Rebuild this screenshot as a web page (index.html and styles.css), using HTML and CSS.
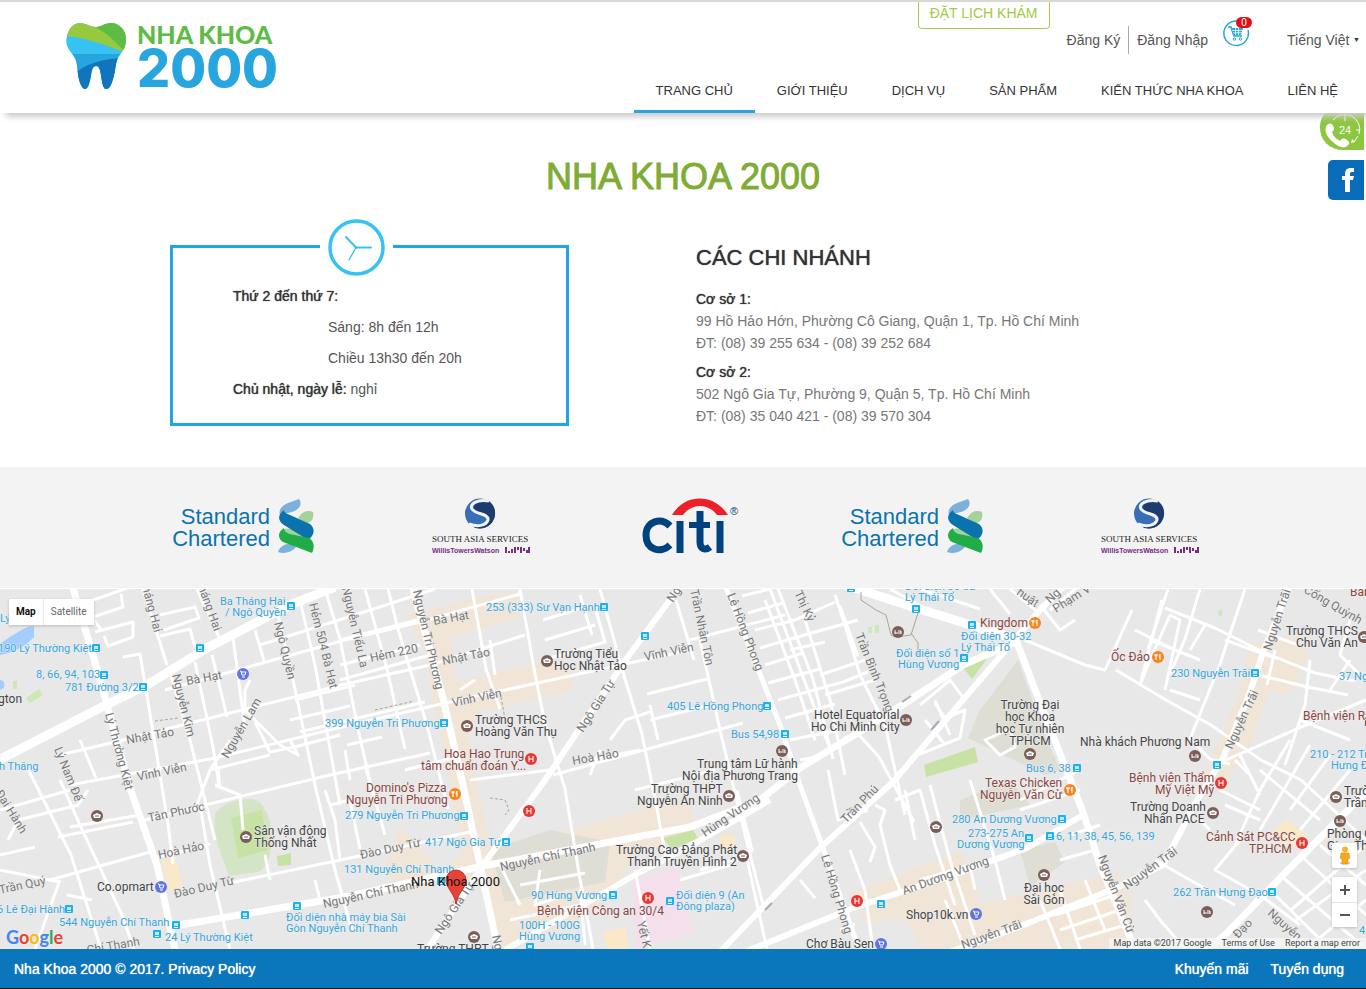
FILE: index.html
```html
<!DOCTYPE html>
<html lang="vi">
<head>
<meta charset="utf-8">
<meta name="viewport" content="width=device-width, initial-scale=1">
<title>Nha Khoa 2000</title>
<link rel="stylesheet" href="styles.css">
</head>
<body>
<header class="header">
  <a class="logo" href="#" aria-label="Nha Khoa 2000">
    <svg width="60" height="68" viewBox="0 0 60 68" aria-hidden="true">
      <defs><clipPath id="tooth"><path d="M1 14C3 6 8 1 14 1C20 1 24 5 30 5C35 5 39 1 45 1C53 1 60 8 60 17C60 25 57 29 53 34C49 40 50 48 47 57C45 64 43 67 40 67C37 67 36 60 35 53C34 47 33 44 30 44C27 44 26 47 25 53C24 60 22 67 19 67C16 67 13 60 12 52C11 43 11 38 7 33C2 27-1 22 1 14Z"/></clipPath></defs>
      <g clip-path="url(#tooth)">
        <path fill="#36c2f3" d="M0 0h60v68H0z"/>
        <path fill="#26a5df" d="M0 32h60v36H0z"/>
        <path fill="#1075bc" d="M8 52C18 43 35 36 60 36v32H8z"/>
        <path fill="#96c93e" d="M0 0h60v31C42 24 22 16 0 14z"/>
        <path fill="#5ebb46" d="M30 6L42 0h18v30C50 22 43 11 30 6z"/>
      </g>
    </svg>
    <span class="logo-text"><span class="logo-name">NHA KHOA</span><span class="logo-number">2000</span></span>
  </a>
  <div class="header-side">
    <div class="toolbar">
      <a class="booking" href="#">ĐẶT LỊCH KHÁM</a>
      <div class="account"><a href="#">Đăng Ký</a><a href="#">Đăng Nhập</a></div>
      <a class="cart" href="#" aria-label="Giỏ hàng">
        <svg width="28" height="28" viewBox="0 0 28 28" aria-hidden="true" fill="none" stroke="#26a5df">
          <path stroke-width="1.500" d="M15 2a12.300 12.300 0 1 0 11 9"/>
          <path stroke-width="1.500" d="M6 8h3l3 9h8"/>
          <path fill="#26a5df" stroke="none" d="M9 9h12l-2 7h-8z"/>
          <path stroke="#fff" stroke-width=".8" d="M10 11.500h11M11 13.800h9M13.500 9v7M16.500 9v7"/>
          <circle cx="12.500" cy="20" r="1.200" /><circle cx="18.500" cy="20" r="1.200"/>
        </svg>
        <span class="cart-count">0</span>
      </a>
      <label class="language"><select aria-label="Ngôn ngữ"><option>Tiếng Việt</option></select><span aria-hidden="true">▼</span></label>
    </div>
    <nav class="nav">
      <a class="active" href="#">TRANG CHỦ</a><a href="#">GIỚI THIỆU</a><a href="#">DỊCH VỤ</a><a href="#">SẢN PHẨM</a><a href="#">KIẾN THỨC NHA KHOA</a><a href="#">LIÊN HỆ</a>
    </nav>
  </div>
</header>

<main>
  <section class="intro">
    <aside class="quick">
      <a class="hotline" href="#" aria-label="Hotline 24h">
        <svg width="44" height="45" viewBox="0 0 44 45" aria-hidden="true">
          <path d="M13 15a15 15 0 0 1 26 14M38 31l-4 6" fill="none" stroke="#fff"/>
          <path d="M25 10v6M36 25h3" stroke="#fff"/>
          <path d="M31 38l1-4 3 3z" fill="#fff"/>
          <path fill="#fff" d="M6 22c1-4 6-5 7-1 2 3 1 4-1 6 1 4 4 7 8 9 2-3 4-3 7-1 3 2 3 4 0 6-3 3-9 1-14-4C8 33 4 27 6 22z"/>
          <text class="hotline-text" x="19" y="29">24</text>
        </svg>
      </a>
      <a class="facebook" href="#" aria-label="Facebook">
        <svg width="14" height="26" viewBox="0 0 14 26" aria-hidden="true"><path fill="#fff" d="M4 25V13H1V9h3V7c0-4 2-6 6-6h3v4h-2C9 5 9 6 9 7v2h4l-1 4H9v12z"/></svg>
      </a>
    </aside>
    <h1>NHA KHOA 2000</h1>
    <div class="details">
      <div class="hours">
        <span class="clock">
          <svg width="57" height="57" viewBox="0 0 57 57" fill="none" stroke="#36c2f3" stroke-linecap="round" aria-hidden="true">
            <circle cx="28.500" cy="28.500" r="26.500" stroke-width="3.500"/>
            <path stroke-width="2" d="M28 28.500h15M28 28.500L18 18"/><path stroke-width="1.300" d="M28 28.500L21 41"/><circle cx="28" cy="28.500" r="1"/>
          </svg>
        </span>
        <p><b>Thứ 2 đến thứ 7:</b></p>
        <p class="indent">Sáng: 8h đến 12h</p>
        <p class="indent">Chiều 13h30 đến 20h</p>
        <p><b>Chủ nhật, ngày lễ:</b> nghỉ</p>
      </div>
      <div class="branches">
        <h2>CÁC CHI NHÁNH</h2>
        <address><b>Cơ sở 1:</b><span>99 Hồ Hảo Hớn, Phường Cô Giang, Quận 1, Tp. Hồ Chí Minh</span><span>ĐT: (08) 39 255 634 - (08) 39 252 684</span></address>
        <address><b>Cơ sở 2:</b><span>502 Ngô Gia Tự, Phường 9, Quận 5, Tp. Hồ Chí Minh</span><span>ĐT: (08) 35 040 421 - (08) 39 570 304</span></address>
      </div>
    </div>
  </section>

  <section class="partners" aria-label="Đối tác">
    <svg class="partner" width="158" height="56" viewBox="0 0 158 56">
      <g id="standard">
        <text class="sc-text" x="99" y="26">Standard</text><text class="sc-text" x="99" y="48">Chartered</text>
        <path fill="#7cb1db" d="M109 17C107 11 112 7 117 5L128 1C132 6 128 12 121 14z"/>
        <path fill="#a5d29b" d="M127 20C132 12 138 12 142 14C143 20 142 23 135 26z"/>
        <path fill="#7cb1db" d="M107 54C109 48 115 45 121 46L125 49C120 55 113 56 107 54z"/>
        <path fill="#a5d29b" d="M111 32c8-3 16-1 23 4l-5 5z"/>
        <path fill="#0a73ae" d="M113 12C106 17 107 23 113 27L137 42C143 38 145 31 139 26L119 17C114 15 113 14 113 12z"/>
        <path fill="#22ac47" d="M113 30C106 34 107 41 112 44L141 55C144 49 143 43 138 40L119 36C114 34 113 32 113 30z"/>
      </g>
    </svg>
    <svg class="partner" width="109" height="56" viewBox="0 0 109 56">
      <g id="asia">
        <ellipse cx="49" cy="15.500" rx="15" ry="15" fill="#376eb5"/>
        <path fill="#1c3c70" d="M52 1C60 2 65 9 64 17C63 25 56 31 48 30.500C42 30 42 29 46 28C59 28 60 20 54 17L44 12C41 9 45 4 52 1z"/>
        <path fill="none" stroke="#f3f3f3" stroke-width="3" d="M58 3C46 1 38 6 41 11C45 17 58 15 57 22C55 28 46 29 38 26"/>
        <text class="asia-text" x="1" y="44">SOUTH ASIA SERVICES</text>
        <text class="willis" x="1" y="55">WillisTowersWatson</text>
        <path fill="none" stroke="#782c82" stroke-width="2" d="M75 49v6M78 53v2M81 51v4M84 49v6M87 49v3M90 49v6M93 50v3M96 52v3M98 49v6"/>
      </g>
    </svg>
    <svg class="partner" width="97" height="56" viewBox="0 0 97 56" role="img" aria-label="citi">
      <path fill="#ed2029" d="M30 17C43-5 72-5 86 17H75C66 5 50 5 41 17z"/>
      <g fill="none" stroke="#004280" stroke-width="7"><path d="M28 28C19 19 4 23 4 37C4 52 19 56 28 47M38 23v32M78 23v32M58 13v31c0 7 5 9 10 5"/><path stroke-width="6" d="M47 27h21"/></g>
      <text class="registered" x="88" y="17">®</text>
    </svg>
    <svg class="partner" width="158" height="56" viewBox="0 0 158 56" role="img" aria-label="Standard Chartered"><use href="#standard"/></svg>
    <svg class="partner" width="109" height="56" viewBox="0 0 109 56" role="img" aria-label="South Asia Services"><use href="#asia"/></svg>
  </section>

  <section class="map" aria-label="Bản đồ">
    <svg class="map-canvas" viewBox="0 589 1366 360" preserveAspectRatio="xMidYMid slice" aria-hidden="true">
      <defs>
        <g id="b"><rect x="-4" y="-4" width="8" height="8" rx="1" fill="#1eb1f1"/><path d="M-2-2h4v3h-4z" fill="#bfe8fb"/><path d="M-2 2.500h4" stroke="#fff"/></g>
        <g id="s"><circle r="6" fill="#7b5e57"/><path d="M-4-1L0-3l4 2-1 3h-6z" fill="#fff"/><path d="M-2 0h4" stroke="#7b5e57"/></g>
        <g id="o"><circle r="6" fill="#7b5e57"/><path d="M-3 2v-4M-3 1h6v-2H0M3 1v1" fill="none" stroke="#fff"/></g>
        <g id="h"><circle r="6" fill="#e53935"/><path d="M-2-3v6M2-3v6M-2 0h4" stroke="#fff"/></g>
        <g id="f"><circle r="6" fill="#f6861f"/><path d="M-2-3v6M2-3v6M-3-3v2h2v-2M2-3q-2 2 0 4" fill="none" stroke="#fff"/></g>
        <g id="m"><circle r="6" fill="#6275df"/><path d="M-3-3h1l1 4h3l1-3h-5M-1 3h3" fill="none" stroke="#fff"/></g>
      </defs>
      <path fill="#e8e8e8" d="M0 589h1366v360H0z"/>
      <g fill="#f0e5d7">
        <path d="M405 616L460 602 517 589 520 618 453 636 455 682 540 662 572 665 573 690 480 712 468 735 478 790 490 846 560 832 690 796 695 838 640 850 600 905 575 925 500 949 478 875 400 895 385 868 400 825 440 870 462 855 450 780 432 700 425 650z"/>
        <path d="M1250 643L1303 636 1307 658 1290 694 1270 692 1248 748 1230 778 1200 785 1240 690z"/>
        <path d="M850 893L960 851 980 895 975 905 865 925z"/><path d="M905 920L1120 872 1132 900 1133 949H920z"/>
      </g>
      <path fill="#deded5" d="M980 710L1018 660 1045 735 1060 770 1045 775 968 738zM960 800l50-20 20 25-70 15zM1020 850l35-8 10 20-35 25zM490 850l60-20 60 12-5 40-100 20z"/>
      <path fill="#a3ccff" d="M0 644q22-16 34-19v12Q20 652 0 655zM0 680q6 0 4 8l-4 2z"/>
      <path fill="#cde8b5" d="M26 698l13-9 4 6-13 8zM13 681h4v8h-4zM868 627h4v6h-4zM875 625h4v8h-4zM1218 611l4-2v6l-3 2z"/>
      <path fill="#d4e5c5" d="M215 815C220 803 240 798 254 799C278 810 276 865 258 872L229 876C220 850 212 835 215 815z"/>
      <path fill="#c8e2a6" d="M231 818l31-8 6 40-30 8zM277 856l14-3v12l-13 1zM663 838l30-8 5 8-26 12zM962 666l36-22-26 35zM924 765l51-18 3 15-52 15z"/>
      <path fill="#fae8c8" d="M162 860l14-3 6 30-13 4zM719 836l15-2 2 13-14 2zM603 932l22-4 4 21h-22zM1272 833l15-14 20 18-15 12z"/>
      <path fill="#f5dfec" d="M632 882l45-15 15 65-55 17z"/>
      <g fill="none" stroke="#fff" stroke-linejoin="round">
        <path stroke-width="3" d="M85 603l42-15M93 617l30-10-2-13M95 632l38-10v15l-25 9-4-10M92 617l10 14M143 589l24 76M197 589l23 50M123 657l17-3 15 90 13 80 5 40M170 672l20 68 25 100M195 662l18 85 6 38M212 655l15 62M233 638l12 90M255 630l9 31M278 615l14 60 23 110 20 85 17 60M300 600l15 65 25 140M325 589l15 50 18 90 16 70M365 589l22 80 18 80M388 589l10 40 30 100 20 80M160 615l35-8 4 11-35 12M160 636l30-7 5 18"/>
        <path stroke-width="3" d="M70 785l145-27 135-33 100-23 110-24 130-28M60 755l55-13 115-29 120-30 80-18 95-30M165 690l65-18 115-32 75-18 100-28M260 645l95-30 80-26M145 820l60-15 125-30 100-22M50 880l100-28M155 858l55-14M230 883l120-25 120-26"/>
        <path stroke-width="3" d="M290 720l60-14M295 700l60-15M300 732l125-30M0 810l70-20M0 855l35-8M8 840l10-20 60-15 10-15M70 827l70-12M58 837l75-15M60 780l20 45 42 90 12 34M26 765l45 90 30 94M0 870l60 12M60 880l-25 69M67 895l25 5M80 740l16 38M195 810l15-40 60-15M215 785l25 10 3 35M250 680l-5 10v20l35 35 18 10-8-15M230 740l-20 30M255 722l15 30 25-5 45-12M200 805l10 60 20 84M220 789l-2-20M330 805l20-5 10 49M340 860l-5-40-10-30M365 765l20 70M405 770l60-15M270 880l-5-25M315 880l5 20"/>
        <path stroke-width="3" d="M472 589l14 80 14 40M520 589l15 85 10 50 20 65 15 90 13 70M543 620l45-14M545 640l50-15M550 658l55-16-10-35M600 589l22 80 20 65 15 75 10 55M580 595l12 40M475 680l-15 10M490 640l5 35M340 665l80-20M340 680l90-25M340 640l85-22M347 745l35-8M350 780l-5-30M690 640l95-25M647 694l60-15M650 720l60-15M610 740l15-20 25-8M590 760l50-10M553 775l80-22 110-30M700 640l20 90 25 105 18 70M676 600l18 60M650 705l8 35M600 750l-10 25M635 790l80-20M470 780l80-10M500 865l20 40M540 870l-5 35 25-8M520 885l65-12M580 890l5 55M510 920l70-15M635 870l15 79M700 870l40-12M737 790l15 60-15 10M745 850l22 99M680 880l50-15"/>
        <path stroke-width="3" d="M742 596l28-7M748 613l35-10M755 630l40-10 40-18M760 648l48-14 50-14M765 665l38-12M768 683l52-14M778 700l65-18 25-10M785 718l50-14M790 740l50-10M765 600l30 80 20 60M778 589l35 90 20 80M805 620l25 80 15 75M835 595l10 30 15 50 25 50 20 90M840 606l18 50M770 589l60 160M790 650l35-8M820 675l45-15M825 695l50-15M800 760l25-5M828 770l10 50 30-10M839 745l20-10 20 22 35 65"/>
        <path stroke-width="3" d="M910 758l25-10 25-10 5-28-20 8-10-15M920 705l30-25 15 20M935 700l15 35M925 720l20 25M895 800l25-10 15 55 20 60M875 805l10 5-5 15 10 40 12 30M860 822l15 25-5 15M850 850l15 40 8 60M905 790l10 50M930 785l20 75 25 75M970 780l25 80 10 40M800 880l15 18M840 930l15-6M920 880l50-15 5 25M945 900l20 49M985 740l15 15 15-8-5-18z"/>
        <path stroke-width="3" d="M1025 640l60 25 20 5 27-60M1116 670l50 30 45 25 50 35 40 20 65 60M1162 600l-22 85 10-25 20-45 10 5-15 70M1168 589l-20 60M1135 630l40 20M1165 608l50 20 50 25 50 20 40 8M1200 589l-15 50-15 35M1245 589l-25 75-30 75 20 20 20 5M1150 640l50 20M1170 690l30 10M1190 650l15-25M1225 640l50 18M1258 630l40 15M1275 650l-8 35M1258 675l50 12 40 8M1310 660l-5 45-20 60M1366 700l-60 25-80 35M1300 720l50 20M1040 605l20 25 15-10M1050 610l30-25M1010 589l30 25"/>
        <path stroke-width="3" d="M890 589l45 25M920 589l60 20M990 589l20 25M1235 760l15 15M1240 755l20 40M1290 740l-30 50-25 55M1310 745l-50 85M1330 755l-40 55M1350 770l-50 60M1220 790l40 20M1225 805l35 15M1210 830l-10-10M1260 770l60 50M1240 840l-25 30 45 25 40 30M1155 860l35 20 45 25M1145 900l15 20 25 29M1300 855l66 60M1280 875l86 74M1270 890l60 59M1320 845l46 40M1366 870l-70 50M1366 900l-60 49M1366 845l-75 65M1070 835l30-10M1060 860l35-10M1020 810l60-20M1060 780l20-10M1060 780l-40 20M1085 880l20 50M1060 890l20 59M1040 900l20 49M1055 915l60-20M1060 930l60-20M1075 940l50-15M1350 620l-10 35 20 20M1330 690l20-30"/>
        <path stroke-width="9" d="M-5 762L100 708 147 685 207 648 290 605 335 587M845 585L913 607 1016 639"/>
        <path stroke-width="7" d="M72 585L98 672 107 705 130 788 157 865 175 950M412 585L443 698 463 785 480 865 498 950M180 925L350 896 483 866 690 827 760 800 800 768 887 715 963 665 1020 640M1014 635L1046 718 1083 812 1099 862 1135 950M1370 788L1283 875 1225 935 1205 952"/>
        <path stroke-width="6" d="M692 570L627 658 543 783 483 865 427 950M505 950L640 872 690 846 770 800M720 952L820 848 893 782 997 660 1040 610 1065 585M745 952L853 908 953 875 1027 848 1083 815M1290 585L1263 652 1249 695 1223 758 1196 802 1163 865 1116 888 1016 928 950 952"/>
        <path stroke-width="5" d="M725 585L780 725 800 785 823 848 853 932 860 952"/>
        <path stroke-width="1" stroke="#aca592" d="M861 592v8l15 10 10 5 5 20 5 2 15-2 7-22M911 633l7 10v14"/>
        <path stroke-width="1" stroke="#aca592" stroke-dasharray="3 2" d="M155 721l24-3M375 710l39-9M501 697l4 22M490 798l15 2 4 10-4 5"/>
      </g>
      <path d="M902 702l9-6M931 730l8-9M765 910l7-7" stroke="#aab" stroke-width="2"/>

      <g class="road">
        <text transform="translate(142 587) rotate(75)">háng Hai</text><text transform="translate(198 587) rotate(70)">háng Hai</text>
        <text transform="translate(187 685) rotate(-10)">Bà Hạt</text><text transform="translate(172 675) rotate(76)">Nguyễn Kim</text>
        <text transform="translate(274 623) rotate(76)">Ngô Quyền</text><text transform="translate(309 604) rotate(76)">Hẻm 504 Bà Hạt</text>
        <text transform="translate(342 588) rotate(77)">Nguyễn Tiểu La</text><text transform="translate(413 591) rotate(77)">Nguyễn Tri Phương</text>
        <text transform="translate(127 744) rotate(-10)">Nhật Tảo</text><text transform="translate(138 781) rotate(-12)">Vĩnh Viễn</text>
        <text transform="translate(105 714) rotate(75)">Lý Thường Kiệt</text><text transform="translate(54 749) rotate(68)">Lý Nam Đế</text>
        <text transform="translate(228 759) rotate(-60)">Nguyễn Lam</text><text transform="translate(-5 793) rotate(58)">Đại Hành</text>
        <text transform="translate(149 822) rotate(-12)">Tân Phước</text><text transform="translate(159 859) rotate(-12)">Hoà Hảo</text>
        <text transform="translate(175 898) rotate(-13)">Đào Duy Từ</text><text transform="translate(0 894) rotate(-12)">Trần Quý</text>
        <text transform="translate(78 956) rotate(-10)">n Chí Thanh</text><text transform="translate(371 662) rotate(-12)">Hẻm 220</text>
        <text transform="translate(434 625) rotate(-10)">Bà Hạt</text><text transform="translate(443 665) rotate(-11)">Nhật Tảo</text>
        <text transform="translate(453 707) rotate(-12)">Vĩnh Viễn</text><text transform="translate(645 661) rotate(-12)">Vĩnh Viễn</text>
        <text transform="translate(583 733) rotate(-57)">Ngô Gia Tự</text><text transform="translate(673 603) rotate(-57)">Ngô</text>
        <text transform="translate(573 765) rotate(-10)">Hoà Hảo</text><text transform="translate(361 859) rotate(-12)">Đào Duy Từ</text>
        <text transform="translate(324 908) rotate(-12)">Nguyễn Chí Thanh</text><text transform="translate(501 871) rotate(-12)">Nguyễn Chí Thanh</text>
        <text transform="translate(441 935) rotate(-56)">Ngô Gia Tự</text><text transform="translate(492 936) rotate(78)">Ng</text><text transform="translate(637 922) rotate(77)">Yết K</text>
        <text transform="translate(690 590) rotate(78)">Trần Nhân Tôn</text><text transform="translate(727 595) rotate(69)">Lê Hồng Phong</text>
        <text transform="translate(794 593) rotate(64)">Thị Kỷ</text><text transform="translate(855 635) rotate(68)">Trần Bình Trọng</text>
        <text transform="translate(705 837) rotate(-34)">Hùng Vương</text><text transform="translate(846 824) rotate(-46)">Trần Phú</text>
        <text transform="translate(821 856) rotate(73)">Lê Hồng Phong</text><text transform="translate(904 895) rotate(-20)">An Dương Vương</text>
        <text transform="translate(963 949) rotate(-20)">Nguyễn Trãi</text><text transform="translate(1098 857) rotate(69)">Nguyễn Văn Cừ</text>
        <text transform="translate(1127 890) rotate(-36)">Nguyễn Trãi</text><text transform="translate(1271 651) rotate(-72)">Nguyễn Trãi</text>
        <text transform="translate(1232 750) rotate(-65)">Nguyễn Trãi</text><text transform="translate(1056 613) rotate(-32)">Phạm V</text>
        <text transform="translate(1050 604) rotate(-43)">Ng</text><text transform="translate(1016 594) rotate(35)">huật</text>
        <text transform="translate(1303 592) rotate(30)">Cống Quỳnh</text><text transform="translate(1238 939) rotate(-46)">Đạo</text><text transform="translate(1267 914) rotate(42)">Nguyễn</text>
      </g>
      <g class="bus">
        <text x="220" y="605">Ba Tháng Hai</text><text x="225" y="616">/ Ngô Quyền</text><text x="0" y="622">Lý</text><text x="-2" y="652">190 Lý Thường Kiệt</text>
        <text x="36" y="678">8, 66, 94, 103</text><text x="65" y="691">781 Đường 3/2</text><text x="-1" y="770">h Thăng</text><text x="325" y="727">399 Nguyễn Tri Phương</text>
        <text x="486" y="611">253 (333) Sư Vạn Hạnh</text><text x="667" y="710">405 Lê Hồng Phong</text><text x="731" y="738">Bus 54,98</text>
        <text x="905" y="590">Đối diện 30-32</text><text x="905" y="601">Lý Thái Tổ</text><text x="961" y="640">Đối diện 30-32</text><text x="961" y="651">Lý Thái Tổ</text><text x="896" y="657">Đối diện số 1</text><text x="898" y="668">Hùng Vương</text>
        <text x="1171" y="677">230 Nguyễn Trãi</text><text x="1339" y="680">37 Ngu</text><text x="1310" y="758">210 - 212 Tr</text><text x="1331" y="769">Hưng Đ</text><text x="1026" y="772">Bus 6, 38</text>
        <text x="345" y="819">279 Nguyễn Tri Phương</text><text x="425" y="846">417 Ngô Gia Tự</text><text x="344" y="873">131 Nguyễn Chí Thanh</text>
        <text x="-3" y="913">6 Lê Đại Hành</text><text x="59" y="926">544 Nguyễn Chí Thanh</text><text x="165" y="941">24 Lý Thường Kiệt</text><text x="286" y="921">Đối diện nhà máy bia Sài</text><text x="286" y="932">Gòn Nguyễn Chí Thanh</text>
        <text x="531" y="899">90 Hùng Vương</text><text x="519" y="929">100H - 100G</text><text x="519" y="940">Hùng Vương</text><text x="676" y="899">Đối diện 9 (An</text><text x="676" y="910">Đông plaza)</text>
        <text x="952" y="823">280 An Dương Vương</text><text x="968" y="837">273-275 An</text><text x="957" y="848">Dương Vương</text><text x="1056" y="840">6, 11, 38, 45, 56, 139</text><text x="1173" y="896">262 Trần Hưng Đạo</text><text x="1359" y="934">4</text>
      </g>
      <g class="place">
        <text x="-2" y="703">gton</text><text x="554" y="658">Trường Tiểu</text><text x="554" y="670">Học Nhật Tảo</text><text x="475" y="724">Trường THCS</text><text x="475" y="736">Hoàng Văn Thụ</text>
        <text x="814" y="719">Hotel Equatorial</text><text x="811" y="731">Ho Chi Minh City</text><text x="697" y="768">Trung tâm Lữ hành</text><text x="682" y="780">Nội địa Phương Trang</text>
        <text x="651" y="793">Trường THPT</text><text x="637" y="805">Nguyễn An Ninh</text><text x="616" y="854">Trường Cao Đẳng Phát</text><text x="627" y="866">Thanh Truyền Hình 2</text>
        <g text-anchor="middle"><text x="1030" y="709">Trường Đại</text><text x="1030" y="721">học Khoa</text><text x="1030" y="733">học Tự nhiên</text><text x="1030" y="745">TPHCM</text><text x="1044" y="892">Đại học</text><text x="1044" y="904">Sài Gòn</text></g>
        <text x="1080" y="746">Nhà khách Phương Nam</text><text x="1286" y="635">Trường THCS</text><text x="1296" y="647">Chu Văn An</text><text x="1130" y="811">Trường Doanh</text><text x="1144" y="823">Nhân PACE</text>
        <text x="1344" y="795">Trường</text><text x="1344" y="807">Trần</text><text x="1327" y="838">Phòng C</text><text x="1327" y="850">Giao Th</text><text x="254" y="835">Sân vận động</text><text x="254" y="847">Thống Nhất</text>
        <text x="97" y="891">Co.opmart</text><text x="906" y="919">Shop10k.vn</text><text x="806" y="948">Chợ Bàu Sen</text><text x="417" y="953">Trường THPT</text><text x="1364" y="726">N</text>
      </g>
      <g class="business">
        <text x="444" y="758">Hoa Hao Trung</text><text x="421" y="770">tâm chuẩn đoán Y...</text><text x="366" y="792">Domino's Pizza</text><text x="346" y="804">Nguyễn Tri Phương</text>
        <text x="980" y="627">Kingdom</text><text x="1111" y="661">Ốc Đảo</text><text x="1303" y="720">Bệnh viện Ra</text><text x="1350" y="596">Bab</text><text x="1129" y="782">Bệnh viện Thẩm</text><text x="1155" y="794">Mỹ Việt Mỹ</text>
        <text x="985" y="787">Texas Chicken</text><text x="980" y="799">Nguyễn Văn Cừ</text><text x="1206" y="841">Cảnh Sát PC&amp;CC</text><text x="1249" y="853">TP.HCM</text><text x="537" y="915">Bệnh viện Công an 30/4</text>
      </g>
      <use href="#b" x="291" y="606"/><use href="#b" x="96" y="648"/><use href="#b" x="104" y="675"/><use href="#b" x="143" y="687"/><use href="#b" x="200" y="648"/><use href="#b" x="444" y="723"/><use href="#b" x="604" y="607"/><use href="#b" x="645" y="636"/><use href="#b" x="767" y="706"/><use href="#b" x="785" y="734"/><use href="#b" x="851" y="588"/><use href="#b" x="916" y="609"/><use href="#b" x="972" y="625"/><use href="#b" x="964" y="658"/><use href="#b" x="1255" y="673"/><use href="#b" x="1217" y="765"/><use href="#b" x="1077" y="768"/><use href="#b" x="464" y="816"/><use href="#b" x="506" y="842"/><use href="#b" x="441" y="881"/><use href="#b" x="69" y="909"/><use href="#b" x="176" y="925"/><use href="#b" x="157" y="934"/><use href="#b" x="245" y="915"/><use href="#b" x="297" y="906"/><use href="#b" x="613" y="895"/><use href="#b" x="530" y="947"/><use href="#b" x="670" y="901"/><use href="#b" x="881" y="904"/><use href="#b" x="1062" y="819"/><use href="#b" x="1029" y="838"/><use href="#b" x="1050" y="836"/><use href="#b" x="1272" y="892"/>
      <use href="#s" x="547" y="661"/><use href="#s" x="467" y="726"/><use href="#s" x="729" y="796"/><use href="#s" x="743" y="856"/><use href="#s" x="1030" y="754"/><use href="#s" x="1044" y="875"/><use href="#s" x="936" y="827"/><use href="#s" x="1213" y="813"/><use href="#s" x="1364" y="637"/><use href="#s" x="1336" y="797"/><use href="#s" x="474" y="937"/><use href="#s" x="246" y="837"/><use href="#s" x="97" y="816"/>
      <use href="#o" x="898" y="632"/><use href="#o" x="906" y="720"/><use href="#o" x="1195" y="756"/><use href="#o" x="782" y="751"/><use href="#o" x="1207" y="912"/><use href="#o" x="1340" y="821"/>
      <use href="#h" x="531" y="759"/><use href="#h" x="529" y="811"/><use href="#h" x="648" y="898"/><use href="#h" x="857" y="901"/><use href="#h" x="1221" y="783"/><use href="#h" x="1302" y="843"/>
      <use href="#f" x="455" y="794"/><use href="#f" x="1035" y="623"/><use href="#f" x="1158" y="657"/><use href="#f" x="1070" y="790"/>
      <use href="#m" x="243" y="674"/><use href="#m" x="161" y="887"/><use href="#m" x="976" y="914"/><use href="#m" x="881" y="944"/>
      <path d="M456 904C455 894 446 888 446 880A10 10 0 0 1 466 880C466 888 457 894 456 904z" fill="#ea4335" stroke="#b5382d"/>
      <text class="marker-label" x="411" y="886">Nha Khoa 2000</text>
    </svg>
    <div class="map-type"><button class="selected" type="button">Map</button><button type="button">Satellite</button></div>
    <div class="map-tools">
      <button class="pegman" type="button" aria-label="Street View"><svg width="12" height="19" viewBox="0 0 12 19" aria-hidden="true"><ellipse cx="6" cy="17" rx="5" ry="1.500" fill="#ccc"/><circle cx="6" cy="3.500" r="3" fill="#f7b32b"/><path fill="#f5a81c" stroke="#d58a10" stroke-width=".5" d="M2 7h8l1 5-2 1v5H3v-5l-2-1z"/></svg></button>
      <div class="zoom"><button type="button" aria-label="Phóng to"><svg width="10" height="10" viewBox="0 0 10 10"><path d="M0 5h10M5 0v10" stroke="#555" stroke-width="2"/></svg></button><button type="button" aria-label="Thu nhỏ"><svg width="10" height="10" viewBox="0 0 10 10"><path d="M0 5h10" stroke="#555" stroke-width="2"/></svg></button></div>
    </div>
    <a class="google" href="#" aria-label="Google"><span class="g-blue">G</span><span class="g-red">o</span><span class="g-yellow">o</span><span class="g-blue">g</span><span class="g-green">l</span><span class="g-red">e</span></a>
    <div class="map-credit"><span>Map data ©2017 Google</span><a href="#">Terms of Use</a><a href="#">Report a map error</a></div>
  </section>
</main>

<footer class="footer">
  <p>Nha Khoa 2000 © 2017. <a href="#">Privacy Policy</a></p>
  <nav><a href="#">Khuyến mãi</a><a href="#">Tuyển dụng</a></nav>
</footer>
</body>
</html>
```
FILE: styles.css
```css
* { box-sizing: border-box; }
body { margin: 0; font: 14px/22px "Liberation Sans", Arial, sans-serif; color: #555; background: #fff; }
a { color: inherit; text-decoration: none; }
p, h1, h2 { margin: 0; }
button { border: 0; padding: 0; background: #fff; font: inherit; }
svg { display: block; flex: none; }

.header { position: relative; z-index: 2; display: flex; justify-content: space-between; height: 113px; padding: 0 6px 0 66px; border-top: 2px solid #d8d8d8; background: #fff; box-shadow: 4px 6px 6px -2px #ccc; }
.logo { display: flex; gap: 11px; align-items: flex-start; padding-top: 20px; }
.logo-text { display: flex; flex-direction: column; }
.logo-name { font: 900 25px/24px Lato, sans-serif; color: #5ebb46; }
.logo-number { font: 800 52px/46px Inter, sans-serif; color: #26a5df; }
.header-side { display: flex; flex-direction: column; justify-content: space-between; align-items: flex-end; }
.toolbar { display: flex; align-items: flex-start; }
.booking { margin-right: 9px; padding: 0 11px 3px; border: 1px solid #a6ce4d; border-top: 0; border-radius: 0 0 4px 4px; line-height: 23px; color: #a0cb43; }
.account { display: flex; padding-top: 24px; line-height: 28px; }
.account a { padding: 0 8px; }
.account a + a { border-left: 1px solid #aaa; }
.cart { position: relative; width: 30px; margin: 17px 35px 0 6px; }
.cart-count { position: absolute; top: -2px; right: 0; width: 16px; border-radius: 6px; background: #e01019; color: #fff; font-size: 10px; line-height: 11px; text-align: center; }
.language { display: flex; align-items: center; padding-top: 24px; height: 52px; }
.language select { width: 66px; padding: 0; border: 0; appearance: none; background: none; color: #555; font: inherit; }
.language span { font-size: 7px; color: #333; pointer-events: none; }
.nav { display: flex; font-size: 13px; color: #333; }
.nav a { padding: 0 22px 8px; border-bottom: 3px solid transparent; }
.nav .active { border-color: #26a5df; }

.intro { position: relative; padding: 41px 170px 40px; }
.quick { position: absolute; top: -8px; right: 2px; display: flex; flex-direction: column; align-items: flex-end; gap: 10px; }
.hotline { border-radius: 22px 0 0 22px; background: #8dc63f; }
.hotline-text { fill: #fff; font-size: 11px; }
.facebook { display: flex; align-items: center; justify-content: center; width: 36px; height: 40px; padding-left: 4px; border-radius: 5px 0 0 5px; background: #096cb8; }
h1 { font-size: 36px; line-height: 46px; font-weight: 400; text-align: center; color: #7fac35; -webkit-text-stroke: 1px #7fac35; }
.details { display: flex; align-items: flex-start; gap: 127px; padding-top: 45px; }
.hours { position: relative; flex: 0 1 399px; padding: 33px 20px 18px 60px; border: 3px solid #1ca8e0; line-height: 31px; }
.indent { padding-left: 95px; }
.clock { position: absolute; top: -29px; left: 147px; padding: 0 8px; background: #fff; }
b { font-weight: 400; color: #333; text-shadow: 0 0 1px #333; }
.branches { flex: 1; }
h2 { margin-bottom: 17px; font-size: 22px; line-height: 26px; font-weight: 400; color: #333; text-shadow: 0 0 1px #333; }
address { margin-bottom: 7px; font-style: normal; color: #777; }
address:last-child { margin-bottom: 0; }
address b, address span { display: block; }

.partners { display: flex; justify-content: space-between; padding: 31px 157px 34px 171px; background: #f3f3f3; }
.sc-text { font-size: 22px; fill: #0a73ae; text-anchor: end; }
.asia-text { font: 9px "Liberation Serif", serif; fill: #222; }
.willis { font: 700 7px "Liberation Sans", sans-serif; fill: #782c82; }
.registered { font-size: 11px; fill: #004280; }

.map { position: relative; height: 360px; margin-top: 1px; overflow: hidden; font-family: Roboto, sans-serif; }
.map-canvas { width: 100%; height: 100%; }
.map-canvas text { font-size: 12px; paint-order: stroke; stroke: #f0f0f0; stroke-width: 1px; stroke-linejoin: round; }
.map-canvas .bus text { font-size: 11px; }
.road { fill: #777; }
.bus { fill: #35a6dc; }
.place { fill: #444; }
.business { fill: #8a4540; }
.map-canvas .marker-label { font-size: 13px; fill: #111; stroke: none; }
.map-type { position: absolute; top: 10px; left: 9px; display: flex; box-shadow: 0 1px 3px #bbb; }
.map-type button { padding: 0 7px; font-size: 10px; line-height: 26px; color: #666; }
.map-type button + button { border-left: 1px solid #e5e5e5; }
.map-type .selected { font-weight: 700; color: #111; }
.map-tools { position: absolute; right: 9px; bottom: 22px; display: flex; flex-direction: column; gap: 9px; }
.pegman, .zoom { width: 25px; border-radius: 2px; background: #fff; box-shadow: 0 1px 3px #bbb; }
.pegman, .zoom button { display: flex; align-items: center; justify-content: center; height: 25px; }
.zoom button { width: 25px; }
.zoom button + button { border-top: 1px solid #e5e5e5; }
.google { position: absolute; left: 6px; bottom: 1px; font: 700 18px/22px Lato, sans-serif; }
.g-blue { color: #4285f4; }
.g-red { color: #ea4335; }
.g-yellow { color: #fbbc05; }
.g-green { color: #34a853; }
.map-credit { position: absolute; right: 0; bottom: 0; display: flex; gap: 10px; padding: 0 6px 0 5px; background: #f5f5f5cc; font-size: 9px; line-height: 11px; color: #444; }

.footer { display: flex; justify-content: space-between; padding: 9px 22px 8px 14px; border-bottom: 1px solid #111; background: #0a76bc; color: #fff; text-shadow: 0 0 1px #fff; }
.footer nav { display: flex; gap: 22px; }
```
